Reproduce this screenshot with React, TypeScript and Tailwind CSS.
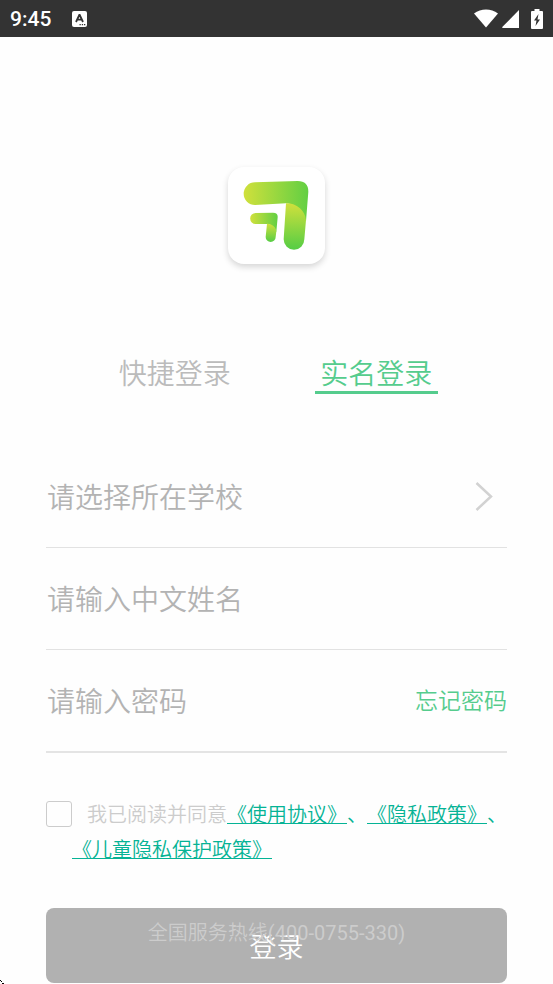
import { useState } from 'react';

function StatusBar() {
    return (
        <header className="flex h-[37px] items-center bg-[#333333] px-[10px] text-white">
            <span className="pt-0.5 text-[21px] font-medium leading-[35px]">9:45</span>
            <svg className="ml-[21px] h-4 w-[15px]" viewBox="0 0 15 16">
                <rect width="15" height="16" rx="2" fill="#fff" />
                <path d="M4 11L7.3 4h.4L11 11M5.2 8.7h4.6" fill="none" stroke="#333" strokeWidth="1.8" />
                <path d="M7.5 13h1.3v1.3H7.5zM9.8 13h1.3v1.3H9.8zM12 13h1.3v1.3H12z" fill="#333" />
            </svg>
            <div className="ml-auto flex items-center">
                <svg className="h-[19px] w-6" viewBox="0 0 24 19" fill="#fff">
                    <path d="M0 4.5C7 -1 17 -1 24 4.5L12 18.5z" />
                </svg>
                <svg className="ml-1 h-[18px] w-[17px]" viewBox="0 0 17 18" fill="#fff">
                    <path d="M17 0V18H1Q-.5 18 .5 16.8z" />
                </svg>
                <svg className="ml-3 h-5 w-3" viewBox="0 0 12 20">
                    <path d="M3.5 0h5v2H11q1 0 1 1v16q0 1-1 1H1q-1 0-1-1V3q0-1 1-1h2.5z" fill="#fff" />
                    <path d="M7.5 5L3 11.5h2.5L4.5 17 9 10.5H6.5z" fill="#333" />
                </svg>
            </div>
        </header>
    );
}

function Logo() {
    return (
        <div className="mx-auto h-[97px] w-[97px] rounded-2xl bg-white shadow-[0_3px_6px_rgba(0,0,0,0.16)]">
            <svg className="h-full w-full" viewBox="36 33 291 291">
                <defs>
                    <linearGradient id="arm" x1="0" x2="1" y1="0" y2="0">
                        <stop offset="0" stopColor="#d0e03c" />
                        <stop offset="1" stopColor="#62cf43" />
                    </linearGradient>
                    <linearGradient id="leg" x1="0" x2="0" y1="0" y2="1">
                        <stop offset="0" stopColor="#d0e03c" />
                        <stop offset="1" stopColor="#55cd45" />
                    </linearGradient>
                </defs>
                <path d="M117 79L245 75Q277 75 277 107L270 196Q250 144 210 142L117 147A34 34 0 0 1 117 79z" fill="url(#arm)" />
                <path d="M210 142C245 142 267 165 270 192L265 250A31 31 0 0 1 203 250z" fill="url(#leg)" />
                <path d="M119 171L171 170Q186 170 185 184L181 228Q172 205 152 204L119 204A16.5 16.5 0 0 1 119 171z" fill="url(#arm)" />
                <path d="M153 203C170 204 180 214 181 226L179 243A15 15 0 0 1 149 243z" fill="url(#leg)" />
            </svg>
        </div>
    );
}

export default function App() {
    const [tab, setTab] = useState('realname');
    const [agreed, setAgreed] = useState(false);

    const tabs = [
        { id: 'quick', label: '快捷登录' },
        { id: 'realname', label: '实名登录' },
    ];

    return (
        <div className="relative min-h-screen bg-[#fefefe] font-[Roboto,'Noto_Sans_CJK_SC',sans-serif]">
            <StatusBar />
            <main className="px-[46px] pb-px pt-[130px]">
                <Logo />

                <nav className="mt-[86px] grid grid-cols-2 pl-7 pr-[30px]">
                    {tabs.map((item) => (
                        <button
                            key={item.id}
                            type="button"
                            onClick={() => setTab(item.id)}
                            className={`mx-auto h-11 w-[123px] whitespace-nowrap border-b-[3px] pt-2 text-[28px] font-[350] leading-[33px] ${tab === item.id
                                    ? 'border-[#55cc8d] text-[#55cc8d]'
                                    : 'border-transparent text-[#bbbbbb]'
                                }`}
                        >
                            {item.label}
                        </button>
                    ))}
                </nav>

                <form className="mt-[52px]" onSubmit={(e) => e.preventDefault()}>
                    <button
                        type="button"
                        className="flex h-[102px] w-full items-center justify-between border-b border-[#e2e2e2] pl-px pr-[14px] text-[28px] font-[350] text-[#b3b3b3]"
                    >
                        <span className="pt-1">请选择所在学校</span>
                        <svg className="h-[30px] w-[18px]" viewBox="0 0 18 30" fill="none" stroke="#d2d2d2" strokeWidth="2.5">
                            <path d="M1.5 1L16 14.5 1.5 28" />
                        </svg>
                    </button>
                    <div className="flex h-[102px] items-center border-b border-[#e2e2e2] pl-px">
                        <input
                            type="text"
                            aria-label="中文姓名"
                            placeholder="请输入中文姓名"
                            className="h-12 w-full pt-1 text-[28px] font-[350] outline-none placeholder:text-[#b3b3b3]"
                        />
                    </div>
                    <div className="flex h-[103px] items-center border-b-2 border-[#e4e4e4] pl-px">
                        <input
                            type="password"
                            aria-label="密码"
                            placeholder="请输入密码"
                            className="h-12 w-full min-w-0 flex-1 pt-1 text-[28px] font-[350] outline-none placeholder:text-[#b3b3b3]"
                        />
                        <a href="#forgot" className="pt-1 text-[23px] font-[350] text-[#55cc8d]">忘记密码</a>
                    </div>

                    <div className="mt-11 flex items-start">
                        <input
                            id="agree"
                            type="checkbox"
                            checked={agreed}
                            onChange={(e) => setAgreed(e.target.checked)}
                            className="mt-1 h-[26px] w-[26px] shrink-0 appearance-none rounded-[3px] border border-[#cccccc] checked:bg-[#55cc8d]"
                        />
                        <p className="pt-px indent-[15px] text-[20px] font-[350] leading-[35px] text-[#05b395] [text-spacing-trim:space-all]">
                            <label htmlFor="agree" className="text-[#cccccc]">我已阅读并同意</label>
                            <a href="#terms" className="underline decoration-1 underline-offset-1">《使用协议》</a>、
                            <a href="#privacy" className="underline decoration-1 underline-offset-1">《隐私政策》</a>、
                            <br />
                            <a href="#children" className="underline decoration-1 underline-offset-1">《儿童隐私保护政策》</a>
                        </p>
                    </div>

                    <div className="relative mt-10">
                        <button type="submit" className="h-[75px] w-full rounded-lg bg-[#b1b1b1] pt-1.5 text-[27px] font-[350] text-white">
                            登录
                        </button>
                        <p className="pointer-events-none absolute inset-x-0 top-2.5 text-center text-[20px] leading-[30px] text-[#cccccc]">
                            <span className="font-[350]">全国服务热线</span>(400-0755-330)
                        </p>
                    </div>
                </form>
            </main>
            <svg className="absolute bottom-0 left-0 h-1 w-1" viewBox="0 0 4 4" fill="#000">
                <path d="M0 0h1v1H0zM1 1h1v1H1zM2 3h2v1H2z" />
            </svg>
        </div>
    );
}
